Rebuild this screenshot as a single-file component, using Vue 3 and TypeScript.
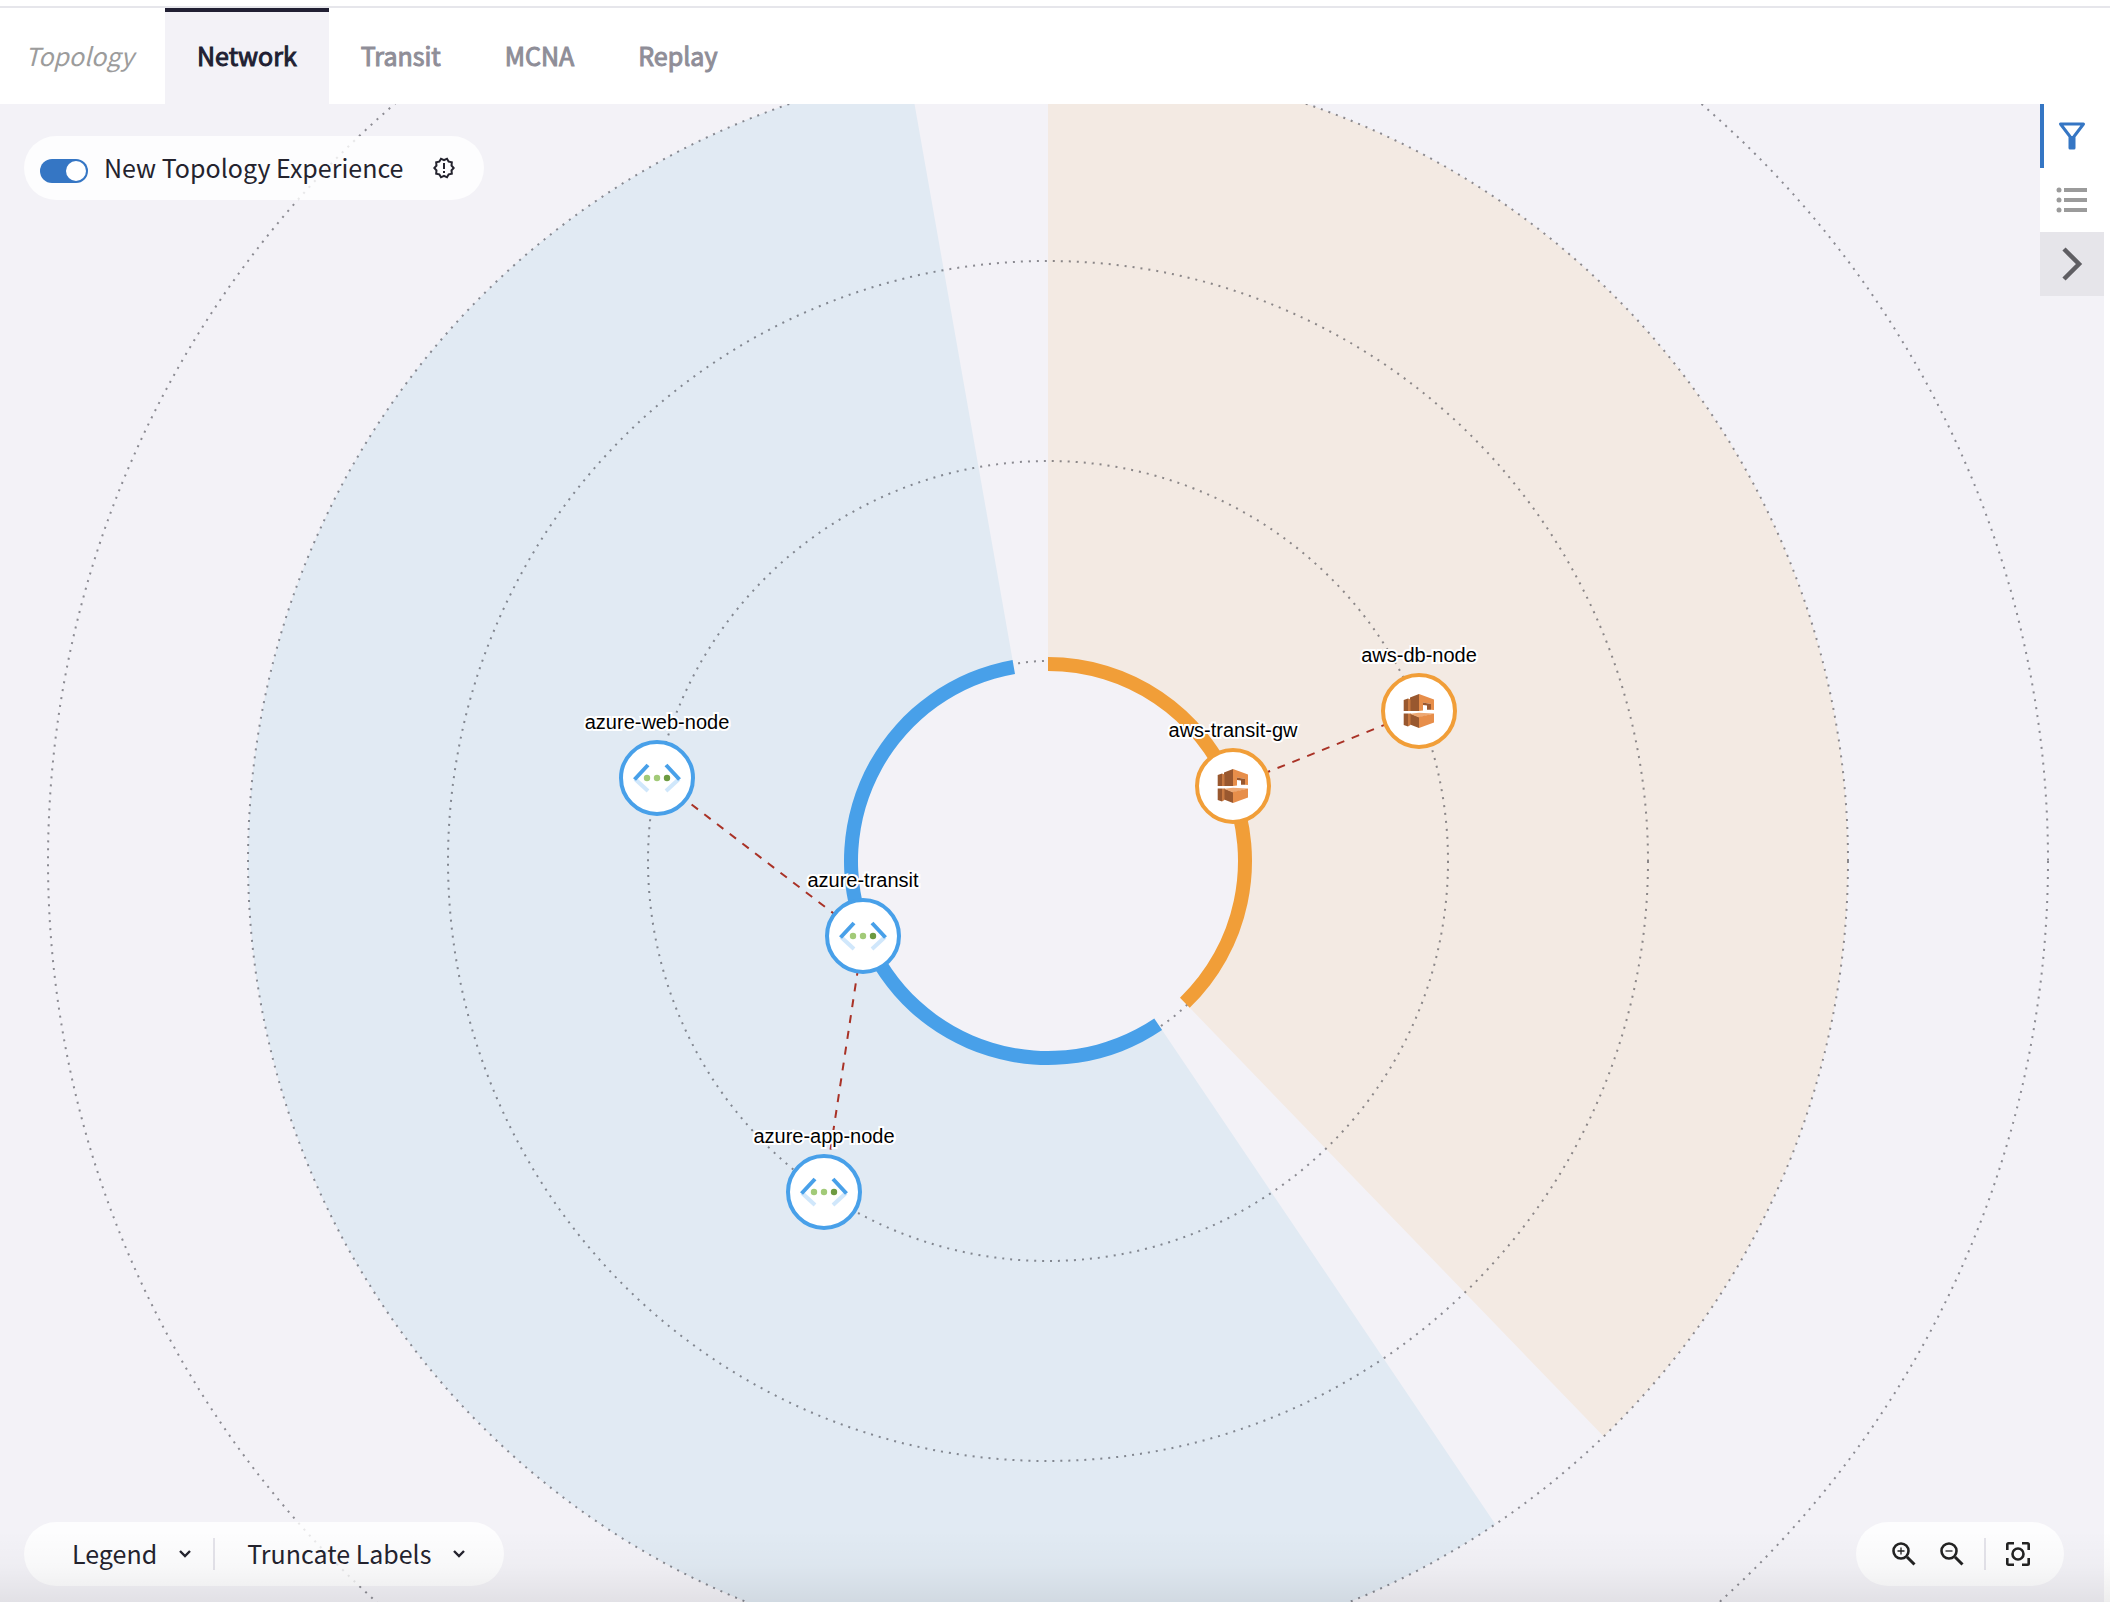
<script setup lang="ts">
import { ref } from 'vue'

type Cloud = 'azure' | 'aws'
interface TopologyNode {
  id: string
  cloud: Cloud
  x: number
  y: number
}

const tabs = ['Network', 'Transit', 'MCNA', 'Replay']
const activeTab = ref('Network')
const newExperience = ref(true)

const centre = { x: 1048, y: 757 }
const rings = [200, 400, 600, 800, 1000]

const nodes: TopologyNode[] = [
  { id: 'azure-web-node', cloud: 'azure', x: 657, y: 674 },
  { id: 'azure-transit', cloud: 'azure', x: 863, y: 832 },
  { id: 'azure-app-node', cloud: 'azure', x: 824, y: 1088 },
  { id: 'aws-transit-gw', cloud: 'aws', x: 1233, y: 682 },
  { id: 'aws-db-node', cloud: 'aws', x: 1419, y: 607 },
]

const links = [
  { from: nodes[1], to: nodes[0] },
  { from: nodes[1], to: nodes[2] },
  { from: nodes[3], to: nodes[4] },
]

const regions = [
  { cloud: 'aws', start: 0, end: 136 },
  { cloud: 'azure', start: 146, end: 350 },
]

/** Point at a clockwise angle from twelve o'clock. */
function polar(radius: number, degrees: number): string {
  const a = (degrees * Math.PI) / 180
  return `${centre.x + radius * Math.sin(a)} ${centre.y - radius * Math.cos(a)}`
}

function band(inner: number, outer: number, start: number, end: number): string {
  const large = end - start > 180 ? 1 : 0
  return (
    `M${polar(outer, start)} A${outer} ${outer} 0 ${large} 1 ${polar(outer, end)} ` +
    `L${polar(inner, end)} A${inner} ${inner} 0 ${large} 0 ${polar(inner, start)} Z`
  )
}
</script>

<template>
  <div class="page">
    <header class="topbar">
      <span class="section">Topology</span>
      <nav class="tabs">
        <a
          v-for="tab in tabs"
          :key="tab"
          href="#"
          class="tab"
          :class="{ active: tab === activeTab }"
          @click.prevent="activeTab = tab"
          >{{ tab }}</a
        >
      </nav>
    </header>

    <main class="canvas">
      <svg class="map" viewBox="0 0 2104 1498" preserveAspectRatio="xMidYMid slice">
        <path
          v-for="r in regions"
          :key="r.cloud"
          :class="['sector', r.cloud]"
          :d="band(200, 800, r.start, r.end)"
        />
        <circle v-for="r in rings" :key="r" class="ring" :cx="centre.x" :cy="centre.y" :r="r" />
        <path
          v-for="r in regions"
          :key="r.cloud"
          :class="['arc', r.cloud]"
          :d="band(190, 204, r.start, r.end)"
        />
        <line
          v-for="l in links"
          :key="l.to.id"
          class="link"
          :x1="l.from.x"
          :y1="l.from.y"
          :x2="l.to.x"
          :y2="l.to.y"
        />
        <g v-for="n in nodes" :key="n.id" :transform="`translate(${n.x} ${n.y})`">
          <circle :class="['node', n.cloud]" r="36" />
          <g v-if="n.cloud === 'azure'" fill="none" stroke-width="4">
            <path d="M-22 1 L-9 13 M22 1 L9 13" stroke="#d0e7fb" />
            <path d="M-22.500 1.500 L-9 -13 M22.500 1.500 L9 -13" stroke="#48a0e9" />
            <g stroke="none">
              <circle cx="-10" r="3.200" fill="#a2ca78" />
              <circle r="3.200" fill="#a2ca78" />
              <circle cx="10" r="3.200" fill="#6d9a41" />
            </g>
          </g>
          <g v-else>
            <path d="M-15.300 -11 L-11 -12.500 V0 H-15.300Z M-9 -13.500 L0 -17 V0 H-9Z" fill="#99582f" />
            <path d="M-11 -12.500 L-8.500 -11.500 V0 H-11Z" fill="#c87941" />
            <path d="M0 -17 L15 -11.500 V-1 L12 -1.200 V-7 L4 -8.500 V-.5 L0 0Z" fill="#e78e4a" />
            <path d="M4 -8.500 L12 -7 V-1.200 L8 -1.200 V-5.500 L4 -6Z" fill="#99582f" />
            <path d="M-15.300 2.500 H-11 V15.500 L-15.300 14Z M-9 2.500 L0 6 V17 L-9 13.500Z" fill="#99582f" />
            <path d="M-11 2.500 H-8.500 V14 L-11 15.500Z" fill="#c87941" />
            <path d="M-9 2.800 L0 1.800 L15 2.500 L0 6.500Z" fill="#eda873" />
            <path d="M0 6 L15 2.500 V11.500 L0 17Z" fill="#e78e4a" />
          </g>
          <text class="label" y="-49">{{ n.id }}</text>
        </g>
      </svg>

      <div class="overlay">
        <div class="row">
          <div class="pill experience">
            <input id="experience" v-model="newExperience" type="checkbox" class="switch" />
            <label for="experience">New Topology Experience</label>
            <svg class="badge" viewBox="0 0 24 24">
              <path
                fill="#24232e"
                d="M23 12l-2.440-2.780.340-3.680-3.610-.820-1.890-3.180L12 3 8.600 1.540 6.710 4.720l-3.610.810.340 3.680L1 12l2.440 2.780-.340 3.690 3.610.820 1.890 3.180L12 21l3.400 1.460 1.890-3.180 3.610-.820-.340-3.680L23 12zm-4.510 2.110l.260 2.790-2.740.620-1.430 2.410L12 18.820l-2.580 1.110-1.430-2.410-2.740-.620.260-2.800L3.660 12l1.850-2.120-.260-2.780 2.740-.610 1.430-2.410L12 5.180l2.580-1.110 1.430 2.410 2.740.620-.260 2.790L20.340 12l-1.850 2.110zM11 15h2v2h-2zm0-8h2v6h-2z"
              />
            </svg>
          </div>
          <aside class="tools">
            <button type="button" class="tool selected" aria-label="Filter">
              <svg width="32" height="32" viewBox="0 0 32 32">
                <path d="M4.500 4 H27.500 L18 16.500 V28 H14 V16.500Z" fill="none" stroke="#3576c4" stroke-width="3" stroke-linejoin="round" />
                <path d="M13 16 H19 V29 H13Z" fill="#3576c4" />
              </svg>
            </button>
            <button type="button" class="tool" aria-label="List">
              <svg width="32" height="32" viewBox="0 0 32 32" fill="#9b9b9b">
                <circle cx="3" cy="6" r="2.500" /><circle cx="3" cy="16" r="2.500" /><circle cx="3" cy="26" r="2.500" />
                <path d="M8 4 h23 v4 h-23z M8 14 h23 v4 h-23z M8 24 h23 v4 h-23z" />
              </svg>
            </button>
            <button type="button" class="tool expand" aria-label="Expand">
              <svg width="32" height="36" viewBox="0 0 32 36">
                <path d="M8 3 L23 18 L8 33" fill="none" stroke="#5f5e63" stroke-width="4.500" />
              </svg>
            </button>
          </aside>
        </div>

        <div class="row bottom">
          <div class="pill options">
            <button type="button" class="menu">
              <span>Legend</span>
              <svg width="12" height="8" viewBox="0 0 12 8"><path d="M1 1 L6 6 L11 1" fill="none" stroke="#24232e" stroke-width="2.400" /></svg>
            </button>
            <span class="divider"></span>
            <button type="button" class="menu">
              <span>Truncate Labels</span>
              <svg width="12" height="8" viewBox="0 0 12 8"><path d="M1 1 L6 6 L11 1" fill="none" stroke="#24232e" stroke-width="2.400" /></svg>
            </button>
          </div>
          <div class="pill zoom">
            <button type="button" class="icon" aria-label="Zoom in">
              <svg width="24" height="24" viewBox="0 0 24 24" fill="none" stroke="#222">
                <circle cx="9" cy="9" r="7.500" stroke-width="2.600" />
                <path d="M15 15 L22.500 22.500" stroke-width="3" />
                <path d="M5.500 9 H12.500 M9 5.500 V12.500" stroke-width="1.300" />
              </svg>
            </button>
            <button type="button" class="icon" aria-label="Zoom out">
              <svg width="24" height="24" viewBox="0 0 24 24" fill="none" stroke="#222">
                <circle cx="9" cy="9" r="7.500" stroke-width="2.600" />
                <path d="M15 15 L22.500 22.500" stroke-width="3" />
                <path d="M5.500 9 H12.500" stroke-width="1.300" />
              </svg>
            </button>
            <span class="divider"></span>
            <button type="button" class="icon" aria-label="Fit to screen">
              <svg width="24" height="24" viewBox="0 0 24 24" fill="none" stroke="#222" stroke-width="2.600">
                <circle cx="12" cy="12" r="5.500" />
                <path d="M1.300 8 V2.500 Q1.300 1.300 2.500 1.300 H8 M16 1.300 H21.500 Q22.700 1.300 22.700 2.500 V8 M22.700 16 V21.500 Q22.700 22.700 21.500 22.700 H16 M8 22.700 H2.500 Q1.300 22.700 1.300 21.500 V16" />
              </svg>
            </button>
          </div>
        </div>
      </div>
    </main>
    <div class="fade"></div>
  </div>
</template>

<style>
body {
  margin: 0;
}
</style>

<style scoped>
.page {
  position: relative;
  display: flex;
  flex-direction: column;
  height: 100vh;
  min-height: 640px;
  overflow: hidden;
  background: #fff;
  color: #24232e;
  font-family: 'Noto Sans CJK SC', 'Noto Sans', sans-serif;
  font-size: 25px;
  line-height: 32px;
}
.topbar {
  display: flex;
  margin-top: 6px;
  border-top: 2px solid #e6e6eb;
  height: 96px;
}
.section {
  box-sizing: border-box;
  width: 165px;
  padding: 31px 0 0 25px;
  color: #9c9c9c;
  font-style: italic;
}
.tabs {
  display: flex;
}
.tab {
  padding: 27px 32px 0;
  border-top: 4px solid transparent;
  color: #8f8e98;
  -webkit-text-stroke: 1px currentColor;
  text-decoration: none;
}
.tab.active {
  border-color: #211f33;
  background: #f3f2f7;
  color: #211f33;
}
.canvas {
  position: relative;
  flex: 1;
  min-height: 0;
  margin-right: 6px;
  background: #f3f2f7;
}
.map {
  position: absolute;
  inset: 0;
  width: 100%;
  height: 100%;
}
.sector.azure {
  fill: #e1eaf3;
}
.sector.aws {
  fill: #f3eae3;
}
.ring {
  fill: none;
  stroke: #24232e;
  stroke-opacity: 0.5;
  stroke-width: 2;
  stroke-dasharray: 2 6;
}
.arc.azure {
  fill: #48a0e9;
}
.arc.aws {
  fill: #f19e38;
}
.link {
  stroke: #a93226;
  stroke-width: 2;
  stroke-dasharray: 8;
}
.node {
  fill: #fff;
  stroke-width: 4;
}
.node.azure {
  stroke: #48a0e9;
}
.node.aws {
  stroke: #f19e38;
}
.label {
  fill: #000;
  stroke: #fff;
  stroke-width: 4px;
  paint-order: stroke;
  font-family: 'Liberation Sans', Arial, sans-serif;
  font-size: 20px;
  text-anchor: middle;
}
.overlay {
  position: relative;
  display: flex;
  flex-direction: column;
  justify-content: space-between;
  height: 100%;
}
.row {
  display: flex;
  justify-content: space-between;
  align-items: flex-start;
}
.row.bottom {
  padding: 0 40px 16px 24px;
}
.pill {
  box-sizing: border-box;
  display: flex;
  align-items: center;
  height: 64px;
  border-radius: 32px;
  background: rgba(255, 255, 255, 0.8);
}
.pill label,
.menu span {
  padding-bottom: 2px;
}
.experience {
  margin: 32px 0 0 24px;
  padding: 0 28px 0 16px;
}
.switch {
  appearance: none;
  position: relative;
  width: 48px;
  height: 24px;
  margin: 6px 16px 0 0;
  border-radius: 12px;
  background: #b5b5bd;
}
.switch::after {
  content: '';
  position: absolute;
  top: 2px;
  left: 2px;
  width: 20px;
  height: 20px;
  border-radius: 50%;
  background: #fff;
}
.switch:checked {
  background: #3576c4;
}
.switch:checked::after {
  left: 26px;
}
.badge {
  width: 24px;
  height: 24px;
  margin-left: 29px;
}
.tools {
  display: flex;
  flex-direction: column;
  width: 64px;
}
button {
  display: flex;
  align-items: center;
  padding: 0;
  border: 0;
  background: none;
  color: inherit;
  font: inherit;
}
.tool {
  justify-content: center;
  height: 64px;
  background: #fff;
}
.tool.selected {
  box-shadow: inset 4px 0 #3576c4;
}
.tool.expand {
  background: #e6e5ea;
}
.options {
  padding: 0 39px 0 48px;
}
.menu {
  gap: 22px;
}
.divider {
  width: 2px;
  height: 32px;
  background: #e4e3ea;
}
.options .divider {
  margin: 0 32px 0 22px;
}
.zoom {
  padding: 0 34px 0 36px;
}
.zoom .icon + .icon {
  margin-left: 24px;
}
.zoom .divider {
  margin: 0 20px;
}
.fade {
  position: absolute;
  right: 0;
  bottom: 0;
  left: 0;
  height: 72px;
  background: linear-gradient(rgba(0, 0, 0, 0), rgba(0, 0, 0, 0.02) 50%, rgba(0, 0, 0, 0.07));
  pointer-events: none;
}
</style>
